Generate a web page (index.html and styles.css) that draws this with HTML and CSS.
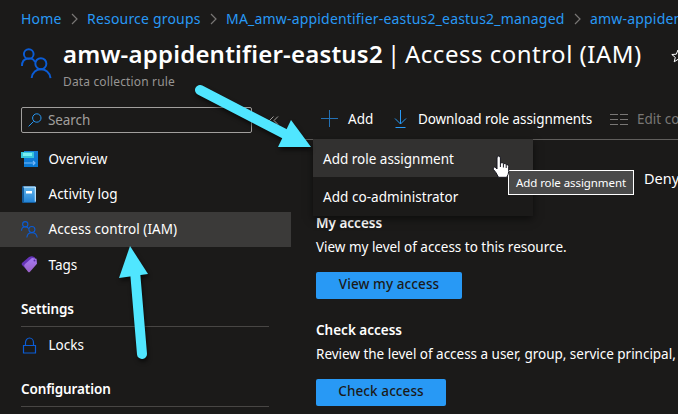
FILE: index.html
```
<!DOCTYPE html>
<html lang="en">
<head>
<meta charset="utf-8">
<title>Access control (IAM)</title>
<link rel="stylesheet" href="styles.css">
</head>
<body>
<svg class="defs" width="0" height="0"><defs>
  <symbol id="people" viewBox="0 0 32 32"><g fill="none" stroke="#0b5cd5" stroke-width="2"><circle cx="8" cy="6.2" r="5"/><path d="M1 18.500C1 9 12 9 14.500 14.500"/><circle cx="20.500" cy="16.200" r="5.700"/><path d="M11 31C12 19 29 19 30.500 31"/></g></symbol>
</defs></svg>
<nav class="crumbs">
  <a class="c-home">Home</a><svg class="chev" viewBox="0 0 7 12"><path d="M1 1l5 5-5 5"/></svg>
  <a class="c-groups">Resource groups</a><svg class="chev" viewBox="0 0 7 12"><path d="M1 1l5 5-5 5"/></svg>
  <a class="c-managed">MA_amw-appidentifier-eastus2_eastus2_managed</a><svg class="chev" viewBox="0 0 7 12"><path d="M1 1l5 5-5 5"/></svg>
  <a class="c-last">amw-appidentifier-eastus2</a>
</nav>
<header class="head">
  <svg class="head-icon"><use href="#people"/></svg>
  <div class="head-text">
    <h1><b>amw-appidentifier-eastus2</b><span class="bar">|</span><span class="page">Access control (IAM)</span></h1>
    <p>Data collection rule</p>
  </div>
  <svg class="star" viewBox="0 0 14 14"><path d="M7 1l1.700 4.200 4.500.3-3.500 2.900 1.100 4.400L7 10.400l-3.800 2.400 1.100-4.400L.8 5.500l4.500-.3z"/></svg>
</header>
<div class="body">
  <aside class="side">
    <div class="search-row">
      <div class="search"><svg width="14" height="14" viewBox="0 0 14 14"><path d="M.6 13.400L5.500 8.500" /><circle cx="8.800" cy="5" r="4.200"/></svg><span>Search</span></div>
      <svg class="collapse" width="10" height="9" viewBox="0 0 10 9"><path d="M4.500.5l-4 4 4 4M9 .5l-4 4 4 4"/></svg>
    </div>
    <ul>
      <li><svg class="ico" viewBox="0 0 17 17"><defs><linearGradient id="blue" x2="0" y2="1"><stop stop-color="#187fd8"/><stop offset="1" stop-color="#0878d4"/></linearGradient><linearGradient id="book" x2="0" y2="1"><stop stop-color="#63b6ee"/><stop offset="1" stop-color="#2484d6"/></linearGradient><linearGradient id="tag" x2="0" y2="1"><stop stop-color="#a67af4"/><stop offset="1" stop-color="#9960c5"/></linearGradient></defs><path fill="url(#blue)" d="M3 1h14v16H3z"/><path fill="#35c5dc" d="M0 2h13v6H0z"/><path fill="#78edf2" d="M2 3h9v3H2z"/><path stroke="#76b9fa" stroke-width="1.200" fill="none" d="M3 13h11M12 11l2 2-2 2"/></svg><span class="t-over">Overview</span></li>
      <li><svg class="ico" viewBox="0 0 17 17"><rect x="1" width="14" height="17" rx="1.200" fill="#155c9b"/><rect x="3" y="1" width="12" height="15" fill="url(#book)"/><path d="M2.500 1h11.800v14.500" fill="none" stroke="#d9effb"/><path fill="#fff" d="M5 5h6v2.500H5z"/></svg><span class="t-log">Activity log</span></li>
      <li class="active"><svg class="ico"><use href="#people"/></svg><span class="t-iam">Access control (IAM)</span></li>
      <li><svg class="ico" viewBox="0 0 17 17"><path fill="#6534b7" d="M1 7L8 1q2-1 4-.5l2 1v5L6 14 1 9q-.8-1 0-2z"/><path fill="url(#tag)" d="M4 8l7-6 4.500.7.5 5L9 15.800q-1 1-2 0L3.600 11Q2.500 9.500 4 8z"/><circle cx="13.500" cy="4.500" r="1" fill="#5c2ca5"/></svg><span class="t-tags">Tags</span></li>
    </ul>
    <h2>Settings</h2>
    <ul class="locks"><li><svg class="ico" viewBox="0 0 17 17"><path d="M2.500 8.500h12v7.500h-12zM4.500 8.500V5.500a4 4.500 0 0 1 8 0v3" fill="none" stroke="#0b5cd5" stroke-width="1.200"/></svg><span class="t-locks">Locks</span></li></ul>
    <h2 class="conf">Configuration</h2>
  </aside>
  <main>
    <div class="toolbar">
      <svg class="plus" width="18" height="18" viewBox="0 0 18 18"><path d="M8.500 0v17M0 8.500h17"/></svg><span class="t-add">Add</span>
      <svg class="down" width="13" height="18" viewBox="0 0 13 18"><path d="M6.500 0v14M1 8.500l5.500 5.500L12 8.500"/><path class="base" d="M1.500 17.500h10"/></svg><span class="t-down">Download role assignments</span>
      <svg class="cols" width="18" height="11" viewBox="0 0 18 11"><path d="M0 .5h8M10 .5h8M0 5.500h8M10 5.500h8M0 10.500h8M10 10.500h8"/></svg><span class="t-edit">Edit columns</span>
    </div>
    <div class="tabs"><span>Deny</span></div>
    <section class="my">
      <h3>My access</h3>
      <p class="t-view">View my level of access to this resource.</p>
      <button>View my access</button>
    </section>
    <section class="check">
      <h3>Check access</h3>
      <p class="t-review">Review the level of access a user, group, service principal,</p>
      <button>Check access</button>
    </section>
  </main>
</div>
<div class="menu"><div class="hover"><span class="t-ara">Add role assignment</span></div><div><span class="t-aca">Add co-administrator</span></div></div>
<div class="tip"><span>Add role assignment</span></div>
<svg class="cursor" width="18" height="24" viewBox="0 0 18 24"><path d="M5 14V3q0-2 1.700-2T8.400 3v5q2.200-1 3 .7 2-.7 2.700.8 2.400-.4 2.600 1.800v5q0 3-2 6H6.500Q4 17 1.300 14.300q-.7-2 1.200-2.200Q4 12.500 5 14z" fill="#fff" stroke="#171720"/><path d="M8.400 8v4M11.400 9v3.500M14.200 10v3" stroke="#171720" fill="none"/></svg>
<svg class="arrows" viewBox="0 0 678 414"><g fill="#50e6ff"><path d="M200 90L287 135" stroke="#50e6ff" stroke-width="10" stroke-linecap="round"/><path d="M291 120L311 147H278z"/><path d="M142 354L134.500 265" stroke="#50e6ff" stroke-width="10" stroke-linecap="round"/><path d="M130 246L148 274L119 278z"/></g></svg>
</body>
</html>
```
FILE: styles.css
```
* { box-sizing: border-box; margin: 0; padding: 0; }
body { width: 678px; height: 414px; overflow: hidden; position: relative; background: #1b1a19; color: #fff; font: 13.5px/20px "Noto Sans", "Open Sans", sans-serif; white-space: nowrap; }
ul { list-style: none; }
svg { flex: none; display: block; }
.defs { position: absolute; }
.crumbs { display: flex; align-items: center; height: 37px; padding-left: 21px; color: #2899f5; font-size: 14px; letter-spacing: 0.19px; overflow: hidden; }
.chev { width: 7px; height: 12px; margin: 0 9px; fill: none; stroke: #797775; stroke-width: 1.2; }
.crumbs a { flex: none; }
.c-home { width: 41px; }
.c-groups { width: 114px; }
.c-managed { width: 339px; }
.head { display: flex; height: 70px; padding-left: 21px; overflow: hidden; }
.head-icon { width: 31px; height: 31px; margin-top: 11px; }
.head-text { width: 618px; margin-left: 11px; flex: none; }
h1 { font-size: 24px; line-height: 36px; font-weight: 400; display: flex; margin-top: -1px; }
h1 b { width: 321px; font-weight: 600; letter-spacing: 0.2px; }
h1 .bar { width: 21px; padding-left: 3px; }
h1 .page { letter-spacing: 0.5px; }
.head-text p { font-size: 12px; line-height: 18px; letter-spacing: 0.15px; color: #979593; margin-top: 1px; }
.star { width: 14px; height: 14px; margin: 12px 0 0 -10px; fill: none; stroke: #fff; }
.body { display: flex; height: 307px; }
.side { width: 291px; flex: none; }
.search-row { display: flex; align-items: center; height: 26px; padding-left: 21px; }
.search { width: 231px; height: 26px; border: 1px solid #a19f9d; border-radius: 2px; display: flex; align-items: center; padding-left: 6px; gap: 6px; color: #a19f9d; line-height: 18px; padding-bottom: 1px; letter-spacing: -0.1px; }
.search svg { fill: none; stroke: #2899f5; }
.collapse { margin-left: 17px; fill: none; stroke: #a19f9d; }
.side ul { margin-top: 8px; }
.side li { height: 35.4px; display: flex; align-items: center; padding-left: 21px; gap: 10.5px; }
.side li.active { background: #3b3a39; }
.t-iam { letter-spacing: 0.06px; }
.ico { width: 17px; height: 17px; }
h2 { font-size: 13.5px; line-height: 20px; font-weight: 600; letter-spacing: -0.12px; margin: 16px 22px 0 21px; height: 28px; border-bottom: 1px solid #484644; }
.side ul.locks { margin-top: 1px; }
h2.conf { margin-top: 16px; }
main { width: 387px; flex: none; overflow: hidden; }
.toolbar { height: 33px; padding: 3px 0 0 30px; display: flex; align-items: flex-start; border-bottom: 1px solid #605e5c; }
.toolbar span { flex: none; margin-top: -1px; }
.toolbar svg { fill: none; stroke: #2899f5; }
.toolbar .plus { stroke: #2371b5; }
.t-add { width: 26px; margin-left: 9px; }
.toolbar .down { margin-left: 20px; }
.toolbar .t-down { width: 174px; margin-left: 11px; letter-spacing: -0.09px; }
.toolbar .cols { margin: 4px 0 0 18px; stroke: #797775; }
.t-edit { margin-left: 9px; color: #797775; }
.tabs { height: 73px; padding: 28px 0 0 353px; font-size: 14.5px; }
section { padding-left: 25px; }
section h3 { font-size: 13.5px; line-height: 20px; font-weight: 600; letter-spacing: 0; }
section p { margin-top: 4px; letter-spacing: -0.02px; }
section button { display: block; height: 27px; margin-top: 15px; width: 146px; border: 0; border-radius: 2px; background: #2899f5; color: #1b1a19; font: 500 13.5px/25px "Noto Sans", sans-serif; letter-spacing: 0.1px; padding-bottom: 2px; }
.check { margin-top: 21px; }
.check button { width: 130px; margin-top: 15px; }
.menu { position: absolute; left: 313px; top: 139px; width: 220px; height: 77px; background: #1b1a19; box-shadow: 0 3px 8px #0008; }
.menu div { height: 38px; padding: 10px 0 0 10px; }
.menu .hover { background: #323130; }
.t-aca { letter-spacing: 0.05px; }
.tip { position: absolute; left: 508px; top: 170px; width: 126px; height: 25px; border: 1px solid #fff; background: #4a4a4a; padding-left: 7px; font-size: 11.5px; line-height: 23px; letter-spacing: -0.08px; }
.cursor { position: absolute; left: 492px; top: 155px; }
.arrows { position: absolute; left: 0; top: 0; width: 678px; height: 414px; filter: drop-shadow(1px 3px 2px #0009); }
```
